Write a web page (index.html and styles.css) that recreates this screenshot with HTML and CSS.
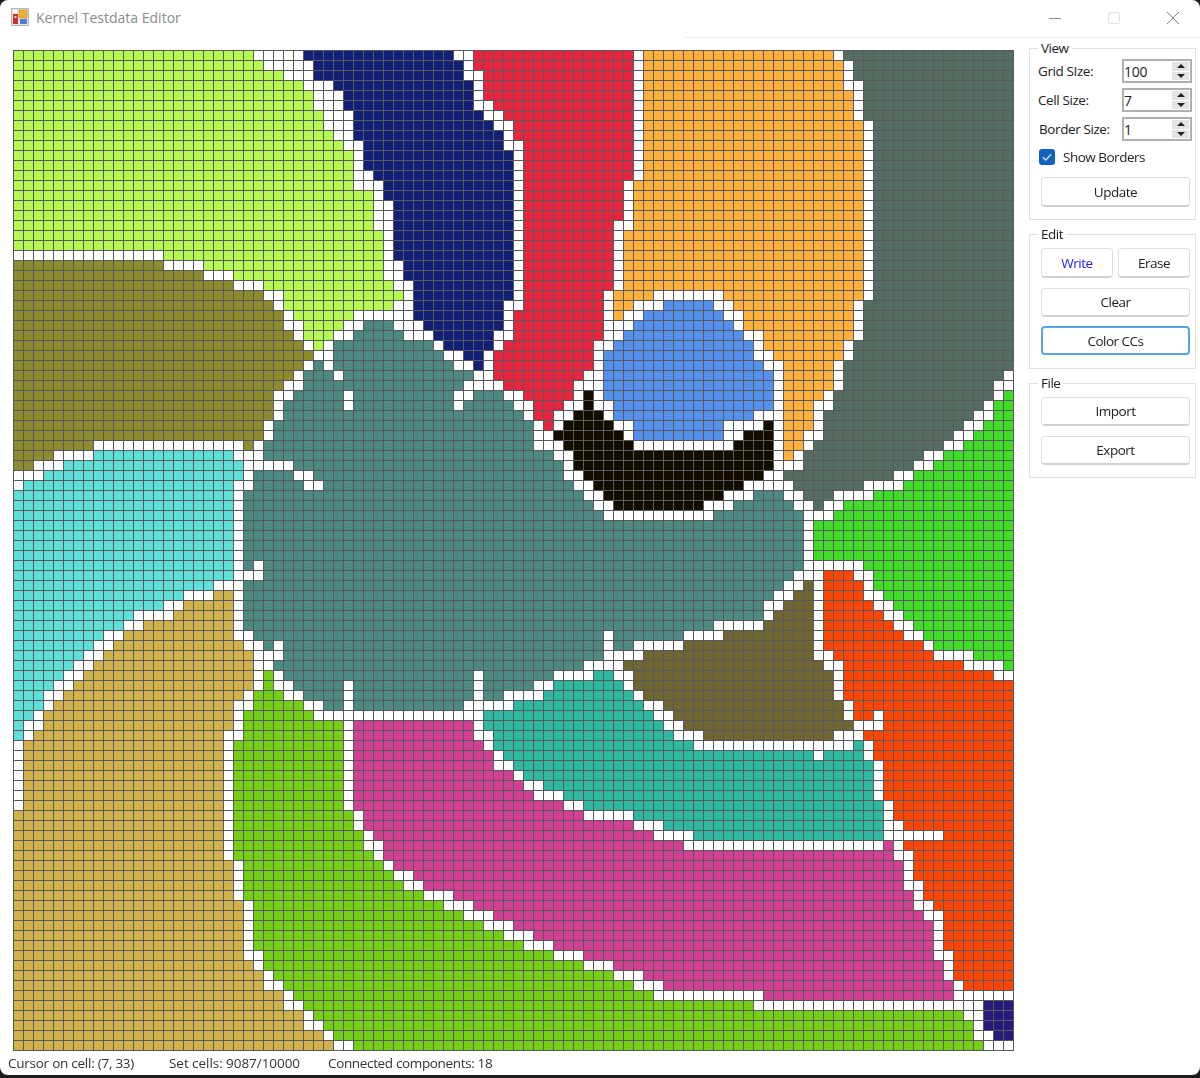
FILE: index.html
```html
<!DOCTYPE html>
<html lang="en">
<head>
<meta charset="utf-8">
<title>Kernel Testdata Editor</title>
<link rel="stylesheet" href="styles.css">
</head>
<body>
<div class="window">
  <header class="titlebar">
    <svg class="app-icon" width="18" height="18" viewBox="0 0 18 18">
      <rect x="0.5" y="0.5" width="17" height="17" fill="#e4e4e4" stroke="#b5b5b5"/>
      <rect x="2" y="6" width="5" height="10" fill="#c8332c"/>
      <rect x="3.5" y="8" width="2" height="2" fill="#f3d9d5"/>
      <rect x="8" y="2" width="8" height="8" fill="#f0b030" stroke="#c98a1c" stroke-width="0.6"/>
      <rect x="9" y="11" width="7" height="5" fill="#4a80d8"/>
      <rect x="2" y="2" width="4" height="3" fill="#fff"/>
    </svg>
    <span class="title-text">Kernel Testdata Editor</span>
    <div class="controls">
      <svg width="14" height="14" viewBox="0 0 14 14"><path d="M1 7.5H13" stroke="#8f8f8f" fill="none"/></svg>
      <svg width="14" height="14" viewBox="0 0 14 14"><rect x="1.5" y="1.5" width="11" height="11" rx="1.5" fill="none" stroke="#e2e2e2"/></svg>
      <svg width="14" height="14" viewBox="0 0 14 14"><path d="M1 1L13 13M13 1L1 13" stroke="#808080" fill="none"/></svg>
    </div>
  </header>
  <main class="main">
    <canvas id="grid" class="grid" width="1001" height="1001"></canvas>
    <aside class="sidebar">
      <fieldset class="group group-view">
        <legend>View</legend>
        <div class="field"><label class="field-label">Grid SIze:</label><div class="spin"><span class="spin-value">100</span><span class="spin-btns"><i class="up"></i><i class="down"></i></span></div></div>
        <div class="field"><label class="field-label">Cell Size:</label><div class="spin"><span class="spin-value">7</span><span class="spin-btns"><i class="up"></i><i class="down"></i></span></div></div>
        <div class="field"><label class="field-label field-label-b">Border Size:</label><div class="spin"><span class="spin-value">1</span><span class="spin-btns"><i class="up"></i><i class="down"></i></span></div></div>
        <div class="check-row">
          <svg class="check" width="16" height="16" viewBox="0 0 16 16"><rect width="16" height="16" rx="3" fill="#0f62bd"/><path d="M3.8 8.2L6.8 11L12.2 5.2" fill="none" stroke="#cfe2f7" stroke-width="1.4"/></svg>
          <span>Show Borders</span>
        </div>
        <button class="btn btn-update">Update</button>
      </fieldset>
      <fieldset class="group group-edit">
        <legend>Edit</legend>
        <div class="btn-pair"><button class="btn btn-write">Write</button><button class="btn">Erase</button></div>
        <button class="btn">Clear</button>
        <button class="btn btn-focus">Color CCs</button>
      </fieldset>
      <fieldset class="group group-file">
        <legend>File</legend>
        <button class="btn">Import</button>
        <button class="btn">Export</button>
      </fieldset>
    </aside>
  </main>
  <footer class="status">
    <span class="status-a">Cursor on cell: (7, 33)</span>
    <span class="status-b">Set cells: 9087/10000</span>
    <span>Connected components: 18</span>
  </footer>
</div>
<script src="script.js"></script>
</body>
</html>
```
FILE: styles.css
```css
* { box-sizing: border-box; }
html, body { margin: 0; padding: 0; }
body {
  width: 1200px;
  height: 1078px;
  overflow: hidden;
  background: #1c1c1c;
  font-family: "Open Sans", "Noto Sans", sans-serif;
  font-size: 13.5px;
  color: #222;
}
.window {
  width: 1200px;
  height: 1075px;
  background: #fff;
  border-radius: 8px;
  display: flex;
  flex-direction: column;
  overflow: hidden;
}
.titlebar {
  height: 37px;
  flex: none;
  display: flex;
  align-items: flex-start;
  padding: 8px 0 0 11px;
  position: relative;
}
.titlebar::after {
  content: "";
  position: absolute;
  left: 685px;
  right: 0;
  bottom: -1px;
  height: 1px;
  background: #ececec;
}
.app-icon { flex: none; }
.title-text {
  margin: 1px 0 0 7px;
  font-size: 14px;
  line-height: 18px;
  color: #8c8c8c;
}
.controls {
  margin-left: auto;
  display: flex;
  gap: 45px;
  padding: 3px 20px 0 0;
}
.main { flex: 1; display: flex; align-items: flex-start; min-height: 0; }
.grid { display: block; width: 1001px; height: 1001px; margin: 13px 0 0 13px; flex: none; }
.sidebar {
  width: 167px;
  margin: 3px 0 0 15px;
  display: flex;
  flex-direction: column;
  gap: 6px;
  flex: none;
  letter-spacing: -0.5px;
}
.group {
  margin: 0;
  padding: 0 5px 0 11px;
  border: 1px solid #e2e2e2;
  display: flex;
  flex-direction: column;
  min-inline-size: 0;
}
.group legend {
  margin-left: -3px;
  padding: 0 3px;
  font-size: 13.5px;
  line-height: 16px;
}
.group-view { height: 180px; padding-left: 9px; }
.group-view legend { margin-left: -1px; }
.group-edit { height: 143px; }
.group-file { height: 103px; }
.field {
  height: 24px;
  margin: 0 -2px 5px -1px;
  display: flex;
  align-items: center;
  justify-content: space-between;
  letter-spacing: -0.4px;
}
.group-view .field:first-of-type { margin-top: 3px; }
.field-label-b { margin-left: 1px; }
.spin {
  width: 70px;
  height: 24px;
  border: 2px solid #b0b0b0;
  display: flex;
  align-items: center;
  background: #fff;
}
.spin-value { flex: 1; font-size: 14px; letter-spacing: -0.2px; }
.spin-btns {
  width: 17px;
  height: 18px;
  margin-right: 1px;
  display: flex;
  flex-direction: column;
  gap: 1px;
}
.spin-btns i {
  flex: 1;
  background: #e3e3e3;
  display: flex;
  align-items: center;
  justify-content: center;
}
.spin-btns i::before {
  content: "";
  border-left: 4px solid transparent;
  border-right: 4px solid transparent;
}
.spin-btns .up::before { border-bottom: 4px solid #222; }
.spin-btns .down::before { border-top: 4px solid #222; }
.check-row {
  height: 16px;
  margin: 3px 0 12px 0;
  display: flex;
  align-items: center;
  gap: 8px;
}
.check { flex: none; }
.btn {
  height: 29px;
  margin: 0 0 9px 0;
  width: 149px;
  padding: 0;
  font: inherit;
  letter-spacing: inherit;
  color: #222;
  background: #fff;
  border: 1px solid #e0e0e0;
  border-bottom: 2px solid #d2d2d2;
  border-radius: 4px;
}
.btn-update { height: 30px; margin-left: 2px; }
.btn-pair { display: flex; justify-content: space-between; width: 149px; margin-top: 6px; }
.btn-pair .btn { width: 72px; height: 30px; margin-bottom: 10px; }
.btn-write { color: #1a1aee; }
.btn-focus { border: 2px solid #5aa2e0; }
.group-file .btn { margin-bottom: 10px; }
.group-file .btn:first-of-type { margin-top: 6px; }
.status {
  flex: none;
  height: 24px;
  display: flex;
  align-items: center;
  padding: 0 0 0 8px;
  letter-spacing: -0.35px;
  color: #333;
}
.status-a { width: 161px; letter-spacing: -0.25px; }
.status-b { width: 159px; letter-spacing: -0.05px; }
```
FILE: script.js
```js
var COLORS = {
  W: "#ffffff", L: "#b6f950", O: "#8e8a2e", N: "#121f76", R: "#e8233e", A: "#ffb13b",
  G: "#546d60", T: "#4c8a82", B: "#5490ee", K: "#130d00", E: "#3fdc28", C: "#5ce0d8",
  S: "#d1b14a", F: "#ff4500", M: "#6f6632", J: "#2db9a0", P: "#d33f92", V: "#75d015", D: "#261a7c"
};
var r10 = "L34 W35 N50 W51 R62 W63 A85 W86 G100";
var r15 = "L36 W38 N50 W51 R61 W62 A85 W86 G100";
var r18 = "L37 W38 N50 W51 R60 W61 A85 W86 G100";
var r47 = "C22 W23 T79 W80 E100";
var ROWS = [
"L24 W29 N44 W46 R62 W63 A82 W83 G100",
"L25 W30 N45 W46 R62 W63 A83 W84 G100",
"L27 W30 N45 W47 R62 W63 A83 W84 G100",
"L29 W32 N46 W47 R62 W63 A83 W85 G100",
"L30 W33 N46 W47 R62 W63 A84 W85 G100",
"L30 W33 N46 W48 R62 W63 A84 W85 G100",
"L31 W34 N47 W49 R62 W63 A84 W85 G100",
"L31 W34 N48 W50 R62 W63 A85 W86 G100",
"L32 W34 N49 W50 R62 W63 A85 W86 G100",
"L33 W35 N49 W51 R62 W63 A85 W86 G100",
r10, r10,
"L34 W36 N50 W51 R62 W63 A85 W86 G100",
"L34 W37 N50 W51 R61 W62 A85 W86 G100",
"L36 W37 N50 W51 R61 W62 A85 W86 G100",
r15, r15,
"L36 W38 N50 W51 R60 W62 A85 W86 G100",
r18, r18,
"W15 L37 W38 N50 W51 R60 W61 A85 W86 G100",
"O15 W19 L37 W39 N50 W51 R60 W61 A85 W86 G100",
"O19 W22 L37 W39 N50 W51 R60 W61 A85 W86 G100",
"O22 W25 L38 W40 N50 W51 R60 W61 A85 W86 G100",
"O25 W27 L39 W40 N50 W51 R59 W60 A64 W71 A85 W86 G100",
"O26 W27 L38 W40 N49 W51 R59 W60 A62 W65 B70 W72 A84 W85 G100",
"O27 W28 L34 W40 N49 W50 R59 W60 A61 W63 B71 W73 A84 W85 G100",
"O27 W29 L33 W35 T38 W41 N49 W50 R59 W62 B72 W73 A84 W85 G100",
"O28 W29 L32 W34 T39 W42 N48 W50 R59 W61 B73 W75 A84 W85 G100",
"O29 W30 L31 W32 T42 W43 N48 W49 R58 W60 B74 W75 A83 W84 G100",
"O30 W32 T43 W45 N47 W48 R58 W59 B74 W76 A83 W84 G100",
"O29 W30 T31 W32 T44 W46 N47 W48 R58 W59 B75 W77 A82 W83 G100",
"O28 W29 T32 W33 T46 W48 R57 W59 B76 W77 A82 W83 G99 W100",
"O27 W29 T45 W49 R56 W59 B76 W77 A82 W83 G98 W100",
"O26 W28 T33 W34 T44 W46 T49 W51 R56 W57 K58 W59 B76 W77 A81 W82 G98 W99 E100",
"O26 W27 T33 W34 T44 W45 T50 W52 R55 W57 K58 W60 B76 W77 A80 W82 G97 W98 E100",
"O26 W27 T51 W52 R54 W56 K59 W60 B74 W77 A80 W81 G96 W98 E100",
"O25 W26 T52 W53 R54 W55 K60 W62 B71 W75 K76 W77 A80 W81 G95 W97 E100",
"O25 W26 T52 W54 K61 W62 B71 W73 K76 W77 A79 W81 G94 W96 E100",
"O8 W23 O24 W25 T52 W55 K62 W72 K76 W77 A79 W80 G93 W95 E100",
"O4 W8 C22 W25 T54 W56 K76 W77 A78 W79 G91 W93 E100",
"O2 W5 C23 W28 T55 W56 K76 W79 G90 W92 E100",
"W3 C23 W24 T28 W30 T55 W57 K75 W77 G88 W90 E100",
"W1 C22 W24 T29 W31 T56 W58 K73 W78 G85 W89 E100",
"C22 W23 T57 W59 K71 W74 T77 W79 G82 W86 E100",
"C22 W23 T58 W60 K69 W72 T78 W80 G81 W83 E100",
"C22 W23 T59 W70 T79 W82 E100",
r47, r47, r47, r47,
"C22 W23 T24 W25 T79 W85 E100",
"C22 W25 T78 W81 F84 W86 E100",
"C20 W23 T77 W79 M80 W81 F85 W86 E100",
"C17 W20 S22 W23 T76 W78 M80 W81 F85 W87 E100",
"C15 W17 S22 W23 T75 W77 M80 W81 F86 W88 E100",
"C12 W16 S22 W23 T75 W76 M80 W81 F87 W89 E100",
"C11 W13 S22 W23 T70 W75 M80 W81 F88 W90 E100",
"C9 W11 S22 W24 T59 W60 T67 W71 M80 W81 F89 W91 E100",
"C8 W10 S23 W25 T26 W27 T59 W60 T62 W67 M80 W81 F91 W92 E100",
"C7 W9 S24 W27 T59 W63 M80 W82 F92 W96 E100",
"C6 W8 S24 W26 T57 W61 M81 W83 F95 W99 E100",
"C5 W7 S24 W25 V26 W27 T46 W47 T54 W58 J60 W62 M82 W83 F98 W100",
"C4 W6 S24 W25 V26 W28 T33 W34 T46 W47 T52 W54 J61 W62 M82 W83 F100",
"C3 W5 S23 W24 V27 W29 T33 W34 T46 W47 T49 W53 J62 W63 M82 W83 F100",
"C3 W4 S22 W24 V29 W31 T33 W34 T45 W50 J63 W65 M83 W84 F100",
"C2 W3 S22 W23 V30 W47 J64 W66 M83 W84 F86 W87 F100",
"C1 W3 S22 W23 V33 W34 P46 W47 J65 W67 M84 W87 F100",
"C1 W2 S21 W23 V33 W34 P46 W48 J66 W69 M82 W85 F100",
"W1 S21 W22 V33 W34 P47 W48 J68 W84 J85 W86 F100",
"W1 S21 W22 V33 W34 P48 W49 J80 W81 J85 W86 F100",
"W1 S21 W22 V33 W34 P48 W50 J86 W87 F100",
"W1 S21 W22 V33 W34 P50 W51 J86 W87 F100",
"W1 S21 W22 V33 W34 P51 W53 J86 W87 F100",
"W1 S21 W22 V33 W34 P52 W55 J86 W87 F100",
"W1 S21 W22 V33 W34 P55 W57 J87 W88 F100",
"S21 W22 V34 W35 P57 W62 J87 W88 F100",
"S21 W22 V34 W35 P62 W65 J87 W89 F100",
"S21 W22 V35 W36 P64 W68 J87 W93 F100",
"S21 W22 V35 W37 P67 W87 P88 W89 F100",
"S21 W22 V36 W37 P88 W90 F100",
"S22 W23 V37 W38 P89 W90 F100",
"S22 W23 V38 W40 P89 W90 F100",
"S22 W23 V39 W41 P89 W91 F100",
"S22 W23 V41 W44 P90 W91 F100",
"S23 W24 V43 W46 P90 W92 F100",
"S23 W24 V45 W48 P91 W93 F100",
"S23 W24 V47 W50 P92 W93 F100",
"S23 W24 V49 W52 P92 W93 F100",
"S23 W24 V51 W54 P92 W93 F100",
"S23 W25 V54 W57 P92 W94 F100",
"S24 W25 V57 W60 P93 W94 F100",
"S25 W26 V60 W63 P93 W94 F100",
"S25 W27 V62 W65 P94 W95 F100",
"S27 W28 V64 W75 P94 W100",
"S27 W29 V74 W97 D100",
"S29 W30 V95 W97 D100",
"S29 W31 V96 W97 D100",
"S31 W32 V96 W98 D100",
"S32 W34 V97 W100"
];
var ctx = document.getElementById("grid").getContext("2d");
ctx.fillStyle = "#58585f";
ctx.fillRect(0, 0, 1001, 1001);
ROWS.forEach(function (row, y) {
  var col = 0;
  row.split(" ").forEach(function (run) {
    var end = parseInt(run.slice(1), 10);
    ctx.fillStyle = COLORS[run[0]];
    for (; col < end; col++) ctx.fillRect(col * 10 + 1, y * 10 + 1, 9, 9);
  });
});
```
